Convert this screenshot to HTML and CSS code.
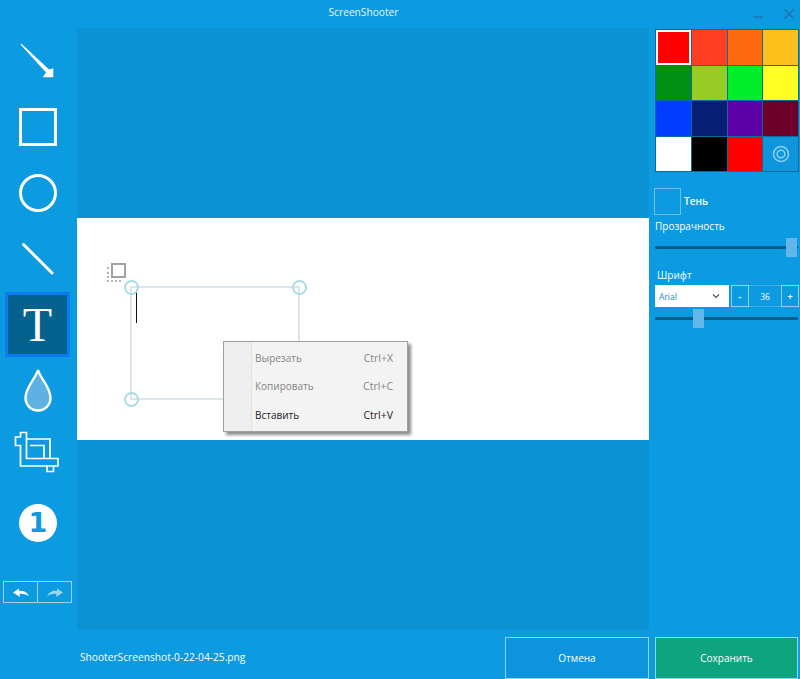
FILE: index.html
```html
<!DOCTYPE html>
<html lang="ru">
<head>
<meta charset="utf-8">
<title>ScreenShooter</title>
<link rel="stylesheet" href="styles.css">
</head>
<body>
<div class="app">
  <header class="titlebar">
    <span class="title">ScreenShooter</span>
    <div class="winbtns">
      <svg class="win-min" width="12" height="12" viewBox="0 0 12 12"><path d="M1 9h10" stroke="#1b75a8" stroke-width="1.300"/></svg>
      <svg class="win-close" width="12" height="12" viewBox="0 0 12 12"><path d="M1.500 1.500l9 9M10.500 1.500l-9 9" stroke="#1b75a8" stroke-width="1.400"/></svg>
    </div>
  </header>
  <div class="main">
    <nav class="tools">
      <div class="tool"><svg width="40" height="40" viewBox="0 0 40 40"><path d="M2.500 3.500L3.500 2.800L31 28.500L35.300 27.300V36.300H24.700L28 31.500Z" fill="#fff"/></svg></div>
      <div class="tool"><div class="sq"></div></div>
      <div class="tool"><div class="circ"></div></div>
      <div class="tool"><svg width="36" height="36" viewBox="0 0 36 36"><path d="M3.500 3.500L32 32" stroke="#fff" stroke-width="3" stroke-linecap="round"/></svg></div>
      <div class="tool tool-active"><span class="t-glyph">T</span></div>
      <div class="tool"><svg width="30" height="46" viewBox="0 0 30 46"><path d="M15 2C17 10 27.500 19 27.500 30a12.500 12.500 0 0 1-25 0C2.500 19 13 10 15 2z" fill="#5db2e2" stroke="#fff" stroke-width="2.400"/></svg></div>
      <div class="tool"><svg width="48" height="56" viewBox="14.500 429 48 56"><g fill="none" stroke="#fff" stroke-width="1.700"><path d="M21 445.500H16V437H21V432.500H27V458.500H58.500V466H21Z"/><path d="M47.500 466V471.500H54V466"/><path d="M27 439H50.500V458.500"/><path d="M30.500 445.500H44.500V458.500"/></g></svg></div>
      <div class="tool"><div class="badge">1</div></div>
      <div class="history">
        <button class="hist"><svg width="20" height="12" viewBox="0 0 20 12"><path d="M2 6.500L8 2.500V5C12 4 16 6 18 10C14 8 11 7.500 8.500 8L9 11Z" fill="#fff"/></svg></button>
        <button class="hist"><svg width="20" height="12" viewBox="0 0 20 12"><path d="M18 6.500L12 2.500V5C8 4 4 6 2 10C6 8 9 7.500 11.500 8L11 11Z" fill="#9fd4ef"/></svg></button>
      </div>
    </nav>
    <section class="canvas">
      <div class="sheet">
        <div class="move-handle"><i class="mh-back"></i><i class="mh-front"></i></div>
        <div class="textbox">
          <i class="caret"></i>
          <i class="grip grip-tl"></i>
          <i class="grip grip-tr"></i>
          <i class="grip grip-bl"></i>
        </div>
        <div class="menu">
          <div class="menu-row off"><span>Вырезать</span><span class="key">Ctrl+X</span></div>
          <div class="menu-row off"><span>Копировать</span><span class="key">Ctrl+C</span></div>
          <div class="menu-row"><span>Вставить</span><span class="key">Ctrl+V</span></div>
        </div>
      </div>
    </section>
    <aside class="side">
      <div class="palette">
        <div class="cell cell-picked" style="background:#ff0000"></div>
        <div class="cell" style="background:#ff3e22"></div>
        <div class="cell" style="background:#ff6a10"></div>
        <div class="cell" style="background:#fcbf1c"></div>
        <div class="cell" style="background:#009112"></div>
        <div class="cell" style="background:#97cc22"></div>
        <div class="cell" style="background:#00ef2a"></div>
        <div class="cell" style="background:#ffff24"></div>
        <div class="cell" style="background:#003dff"></div>
        <div class="cell" style="background:#061f74"></div>
        <div class="cell" style="background:#5b00a6"></div>
        <div class="cell" style="background:#6d0028"></div>
        <div class="cell" style="background:#ffffff"></div>
        <div class="cell" style="background:#000000"></div>
        <div class="cell" style="background:#ff0000"></div>
        <div class="cell cell-custom" style="background:#0e95dc"><svg width="20" height="20" viewBox="0 0 20 20" fill="none" stroke="#8fd2f2"><circle cx="10" cy="10" r="7.500" stroke-width="1.500"/><circle cx="10" cy="10" r="3.800" stroke-width="1.500"/></svg></div>
      </div>
      <div class="shadow-row"><div class="check"></div><span class="shadow-label">Тень</span></div>
      <div class="label label-opacity">Прозрачность</div>
      <div class="slider slider-opacity"><i class="thumb"></i></div>
      <div class="label label-font">Шрифт</div>
      <div class="font-row">
        <div class="select"><span>Arial</span><svg width="8" height="6" viewBox="0 0 8 6"><path d="M1 1.500l3 3 3-3" fill="none" stroke="#555" stroke-width="1.200"/></svg></div>
        <div class="stepper">
          <div class="step step-minus">-</div>
          <div class="size">36</div>
          <div class="step step-plus">+</div>
        </div>
      </div>
      <div class="slider slider-font"><i class="thumb"></i></div>
    </aside>
  </div>
  <footer class="footer">
    <span class="filename">ShooterScreenshot-0-22-04-25.png</span>
    <div class="actions">
      <button class="btn btn-cancel">Отмена</button>
      <button class="btn btn-save">Сохранить</button>
    </div>
  </footer>
</div>
</body>
</html>
```
FILE: styles.css
```css
* { box-sizing: border-box; }
html, body { margin: 0; padding: 0; }
body { width: 800px; height: 679px; overflow: hidden; background: #0c9ae0; font-family: "Open Sans", "Noto Sans", sans-serif; color: #fff; }
.app { width: 800px; height: 679px; display: flex; flex-direction: column; }

.titlebar { height: 28px; flex: none; position: relative; display: flex; justify-content: center; }
.title { font-size: 10.200px; line-height: 25px; margin-right: 73px; color: #eaf7fd; }
.winbtns { position: absolute; right: 0; top: 0; }
.win-min { position: absolute; right: 36px; top: 8px; }
.win-close { position: absolute; right: 5px; top: 8px; }

.main { height: 602px; flex: none; display: flex; }
.tools { width: 77px; flex: none; display: flex; flex-direction: column; }
.tool { height: 66px; flex: none; display: flex; align-items: center; justify-content: center; padding-right: 1px; }
.sq { width: 38px; height: 38px; border: 3px solid #fff; }
.circ { width: 38px; height: 38px; border: 3px solid #fff; border-radius: 50%; }
.tool-active { width: 65px; height: 65px; margin: 0 0 1px 5px; padding: 0; background: #05628f; border: 3px solid #0a7cf0; }
.t-glyph { font-family: "Liberation Serif", serif; font-size: 48px; line-height: 1; }
.badge { width: 38px; height: 38px; border-radius: 50%; background: #fff; color: #0c9ae0; font-family: "DejaVu Sans", sans-serif; font-weight: 700; font-size: 27px; line-height: 38px; text-align: center; }

.history { display: flex; margin: 25px 0 0 3px; width: 69px; height: 22px; }
.hist { flex: 1; padding: 0; margin: 0 0 0 -1px; background: none; border: 1px solid #9fd4ef; display: flex; align-items: center; justify-content: center; }
.hist:first-child { margin-left: 0; }

.canvas { width: 572px; flex: none; background: #0b93d5; display: flex; align-items: center; }
.sheet { width: 100%; height: 222px; background: #fff; position: relative; }

.move-handle { position: absolute; left: 30px; top: 45px; width: 19px; height: 19px; }
.mh-back { position: absolute; left: 0; top: 4px; width: 14px; height: 15px; border-left: 2px dotted #b5b5b5; border-bottom: 2px dotted #b5b5b5; }
.mh-front { position: absolute; left: 4px; top: 0; width: 15px; height: 15px; border: 2px solid #a2a2a2; background: #fff; }

.textbox { position: absolute; left: 53px; top: 68px; width: 170px; height: 114px; border: 2px solid #dbe6e9; }
.caret { position: absolute; left: 4px; top: 2px; width: 1px; height: 33px; background: #111; }
.grip { position: absolute; width: 15px; height: 15px; border: 2px solid #a9dce4; border-radius: 50%; }
.grip-tl { left: -8.500px; top: -8.500px; }
.grip-tr { right: -8.500px; top: -8.500px; }
.grip-bl { left: -8.500px; bottom: -8.500px; }

.menu { position: absolute; left: 146px; top: 123px; width: 185px; height: 91px; background: linear-gradient(90deg, #efefef 27px, #e2e2e2 27px, #e2e2e2 28px, #f3f3f3 28px); border: 1px solid #a0a0a0; box-shadow: 3px 3px 3px rgba(0,0,0,.45); padding: 2px 14px 0 31px; font-size: 10px; color: #222; }
.menu-row { height: 28.300px; display: flex; justify-content: space-between; align-items: center; }
.menu-row.off { color: #858585; }
.key { font-size: 10.500px; }

.side { width: 151px; flex: none; padding: 1px 0 0 6px; position: relative; }
.palette { width: 144px; height: 143px; display: grid; grid-template-columns: repeat(4, 1fr); grid-template-rows: repeat(4, 1fr); gap: 1px; padding: 1px; background: #0b6b9b; }
.cell { display: flex; align-items: center; justify-content: center; }
.cell-picked { border: 2px solid #fff; }
.shadow-row { display: flex; align-items: center; margin: 15px 0 0 -1px; height: 28px; gap: 3px; }
.check { width: 27px; height: 27px; border: 1px solid #6cc0ec; }
.shadow-label { font-size: 10px; font-weight: 600; }
.label { font-size: 10px; line-height: 15px; }
.label-opacity { margin: 4px 0 0 0; }
.slider { height: 3px; background: #075e8b; border-radius: 2px; position: relative; width: 143px; }
.slider-opacity { margin-top: 12px; }
.thumb { position: absolute; top: -8px; width: 11px; height: 19px; background: #62b6ea; }
.slider-opacity .thumb { right: 1px; }
.label-font { margin: 19px 0 0 2px; }
.font-row { display: flex; margin-top: 2px; height: 22px; }
.select { width: 74px; background: #fff; color: #0c8fd4; font-size: 8.500px; padding: 0 9px 0 4px; display: flex; align-items: center; justify-content: space-between; }
.stepper { display: flex; margin-left: 2px; }
.step { width: 18px; border: 1px solid #8fd2f2; font-size: 9px; font-weight: 700; display: flex; align-items: center; justify-content: center; }
.size { width: 32px; font-size: 8.500px; display: flex; align-items: center; justify-content: center; border-top: 1px solid #3fb0e8; border-bottom: 1px solid #3fb0e8; }
.slider-font { margin-top: 10px; }
.slider-font .thumb { left: 38px; }

.footer { flex: 1; display: flex; justify-content: space-between; }
.filename { margin-left: 80px; font-size: 10.200px; line-height: 55px; }
.actions { display: flex; gap: 6px; margin: 7px 2px 0 0; }
.btn { width: 144px; height: 42px; font: inherit; font-size: 10px; color: #fff; border: 1px solid #8fd8f4; padding: 0; }
.btn-cancel { background: #0c94dc; }
.btn-save { width: 143px; background: #0ea47f; }
```
